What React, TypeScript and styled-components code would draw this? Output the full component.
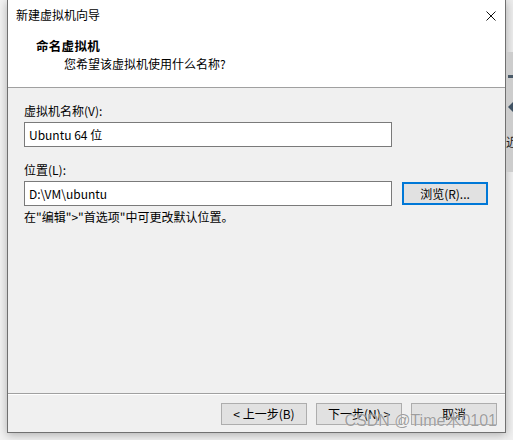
import React from 'react';
import styled, { createGlobalStyle } from 'styled-components';

const GlobalStyle = createGlobalStyle`
  html, body {
    margin: 0;
    padding: 0;
    background: #f2f2f2;
    font-family: "Noto Sans CJK SC", "Noto Sans", sans-serif;
    font-size: 12px;
    color: #000;
  }
`;

const Page = styled.div`
  display: flex;
  width: 513px;
  height: 440px;
  overflow: hidden;
`;

const Gutter = styled.div`
  width: 7px;
  flex-shrink: 0;
`;

const Dialog = styled.div`
  position: relative;
  width: 497px;
  height: 432px;
  flex-shrink: 0;
  display: flex;
  flex-direction: column;
  background: #f0f0f0;
  border: 1px solid #707070;
  border-top: none;
  box-shadow: 0 2px 9px rgba(0, 0, 0, 0.28);
`;

const Top = styled.div`
  height: 87px;
  background: #fff;
  border-bottom: 1px solid #a0a0a0;
  display: flex;
  flex-direction: column;
`;

const TitleBar = styled.div`
  height: 30px;
  display: flex;
  align-items: center;
  justify-content: space-between;
  padding: 0 9px 0 8px;
  line-height: 16px;
`;

const CloseIcon = styled.svg`
  width: 10px;
  height: 10px;
  margin-top: 1px;
`;

const StepTitle = styled.div`
  margin: 8px 0 0 28px;
  font-weight: bold;
  font-size: 12.5px;
  letter-spacing: 0.3px;
  line-height: 16px;
`;

const StepSubtitle = styled.div`
  margin: 2px 0 0 56px;
  line-height: 16px;
`;

const Body = styled.div`
  flex: 1;
  padding: 15px 0 0 16px;
  display: flex;
  flex-direction: column;
`;

const Label = styled.div<{ $gap: number }>`
  line-height: 16px;
  margin-top: ${(p) => p.$gap}px;
`;

const Row = styled.div`
  display: flex;
  align-items: flex-start;
  margin-top: 3px;
`;

const Input = styled.div`
  box-sizing: border-box;
  width: 368px;
  height: 25px;
  background: #fff;
  border: 1px solid #7a7a7a;
  padding: 0 4px;
  display: flex;
  align-items: center;
  line-height: 16px;
`;

const Button = styled.div<{ $focused?: boolean }>`
  box-sizing: border-box;
  width: 86px;
  height: ${(p) => (p.$focused ? 23 : 22)}px;
  display: flex;
  align-items: center;
  justify-content: center;
  background: #e1e1e1;
  border: ${(p) => (p.$focused ? '2px solid #0078d7' : '1px solid #adadad')};
  line-height: 16px;
`;

const BrowseWrap = styled.div`
  margin: 1px 0 0 10px;
`;

const Note = styled.div`
  margin-top: 3px;
  line-height: 16px;
`;

const Footer = styled.div`
  height: 39px;
  box-sizing: border-box;
  border-top: 1px solid #a0a0a0;
  box-shadow: inset 0 1px 0 #fff;
  padding: 9px 8px 8px 0;
  display: flex;
  justify-content: flex-end;
  gap: 9px;
`;

const Watermark = styled.div`
  position: absolute;
  right: 8px;
  bottom: 1px;
  font-family: "Liberation Sans", "Noto Sans CJK SC", sans-serif;
  font-size: 16px;
  line-height: 20px;
  color: rgba(128, 128, 128, 0.75);
  text-shadow: 0 0 1px rgba(255, 255, 255, 0.9);
  pointer-events: none;
`;

const Behind = styled.div`
  flex: 1;
  display: flex;
  flex-direction: column;
`;

const BehindHead = styled.div`
  height: 52px;
  background: #ececec;
`;

const BehindPanel = styled.div`
  height: 120px;
  background: #cdcdcd;
  position: relative;
  overflow: hidden;
`;

const BehindBar = styled.div`
  position: absolute;
  left: 2px;
  top: 23px;
  width: 6px;
  height: 3px;
  background: #4a5a68;
`;

const BehindArrow = styled.div`
  position: absolute;
  left: 2px;
  top: 49px;
  width: 0;
  height: 0;
  border-top: 6px solid transparent;
  border-bottom: 6px solid transparent;
  border-right: 6px solid #3f5263;
`;

const BehindChar = styled.div`
  position: absolute;
  left: 0px;
  top: 82px;
  font-size: 12px;
  line-height: 16px;
  color: #222;
`;

const BehindRest = styled.div`
  flex: 1;
  background: #f0f0f0;
`;

const App: React.FC = () => {
  return (
    <>
      <GlobalStyle />
      <Page>
        <Gutter />
        <Dialog>
          <Top>
            <TitleBar>
              <span>新建虚拟机向导</span>
              <CloseIcon viewBox="0 0 10 10">
                <path d="M0.5 0.5 L9.5 9.5 M9.5 0.5 L0.5 9.5" stroke="#111" strokeWidth="1" fill="none" />
              </CloseIcon>
            </TitleBar>
            <StepTitle>命名虚拟机</StepTitle>
            <StepSubtitle>您希望该虚拟机使用什么名称?</StepSubtitle>
          </Top>
          <Body>
            <Label $gap={0}>虚拟机名称(V):</Label>
            <Row>
              <Input>Ubuntu 64 位</Input>
            </Row>
            <Label $gap={15}>位置(L):</Label>
            <Row>
              <Input>D:\VM\ubuntu</Input>
              <BrowseWrap>
                <Button $focused>浏览(R)...</Button>
              </BrowseWrap>
            </Row>
            <Note>在"编辑"&gt;"首选项"中可更改默认位置。</Note>
          </Body>
          <Footer>
            <Button>&lt; 上一步(B)</Button>
            <Button>下一步(N) &gt;</Button>
            <Button>取消</Button>
          </Footer>
          <Watermark>CSDN @Time木0101</Watermark>
        </Dialog>
        <Behind>
          <BehindHead />
          <BehindPanel>
            <BehindBar />
            <BehindArrow />
            <BehindChar>近</BehindChar>
          </BehindPanel>
          <BehindRest />
        </Behind>
      </Page>
    </>
  );
};

export default App;
